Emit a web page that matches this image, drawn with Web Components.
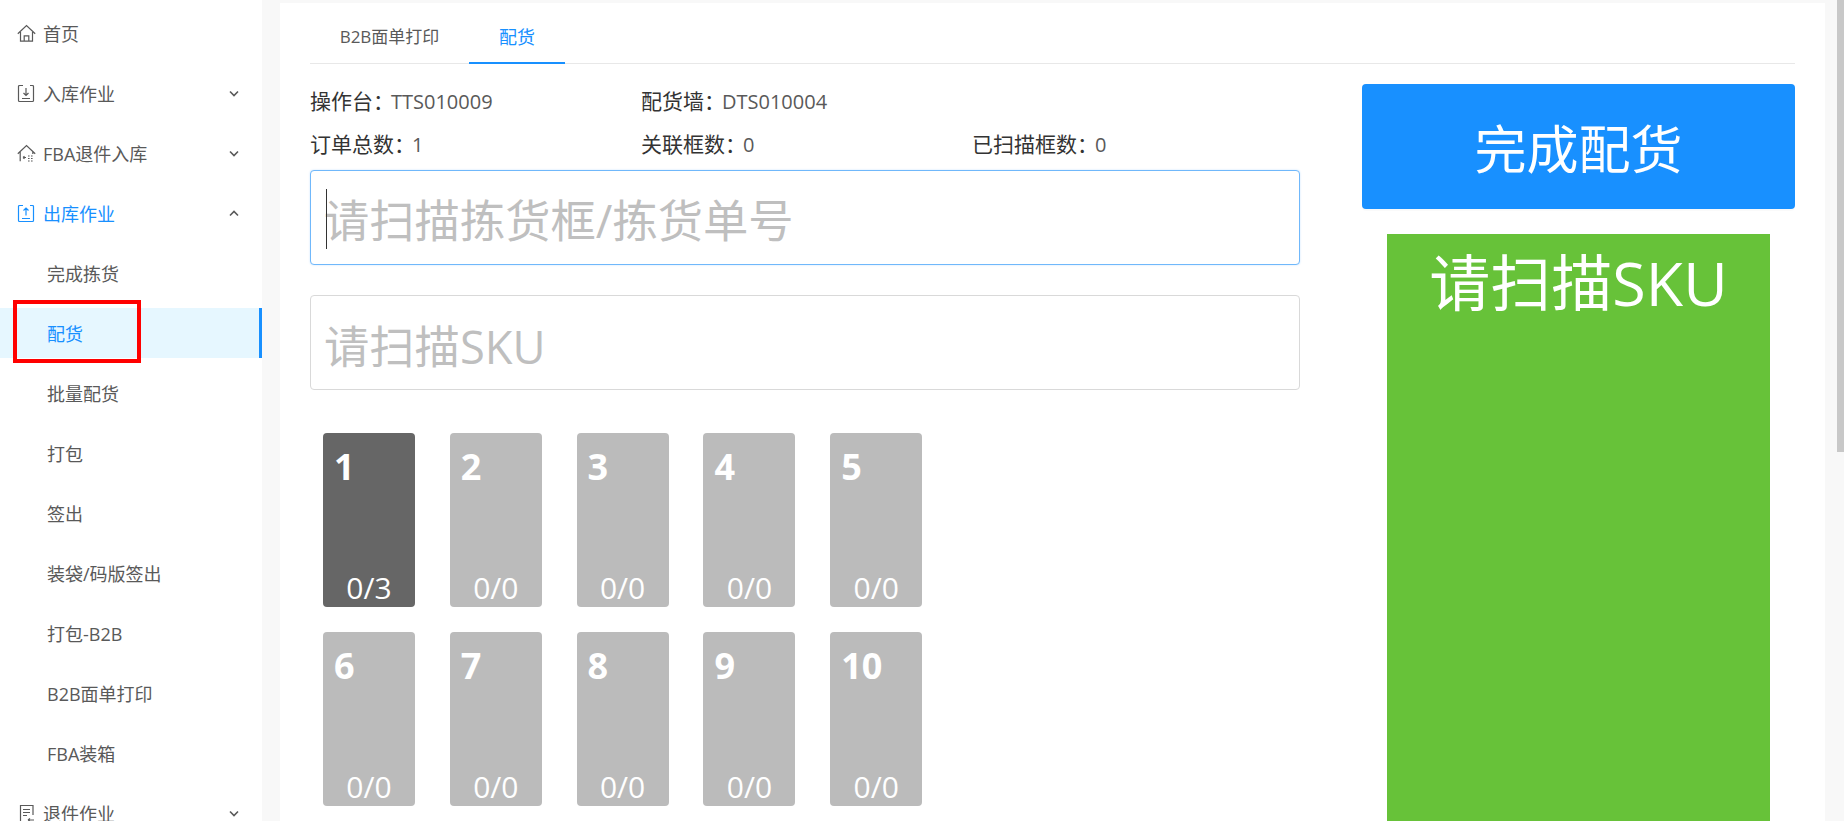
<!DOCTYPE html>
<html lang="zh">
<head>
<meta charset="utf-8">
<title>配货</title>
<style>
  html, body { margin: 0; height: 821px; overflow: hidden; }
  body {
    display: flex;
    background: #f8f8f8;
    font-family: "Open Sans", "Noto Sans CJK SC", sans-serif;
    color: #595959;
  }
</style>
</head>
<body>
<side-menu>
  <menu-item icon="home">首页</menu-item>
  <menu-item icon="in" arrow="down">入库作业</menu-item>
  <menu-item icon="fba" arrow="down">FBA退件入库</menu-item>
  <menu-item icon="out" arrow="up" open>出库作业</menu-item>
  <menu-item sub>完成拣货</menu-item>
  <menu-item sub active marked>配货</menu-item>
  <menu-item sub>批量配货</menu-item>
  <menu-item sub>打包</menu-item>
  <menu-item sub>签出</menu-item>
  <menu-item sub>装袋/码版签出</menu-item>
  <menu-item sub>打包-B2B</menu-item>
  <menu-item sub>B2B面单打印</menu-item>
  <menu-item sub>FBA装箱</menu-item>
  <menu-item icon="back" arrow="down">退件作业</menu-item>
</side-menu>
<pick-page></pick-page>
<fake-scrollbar></fake-scrollbar>

<script>
// Iconos del menu lateral
const ICONS = {
  home: '<path d="M.8 9.7 9.5 1.5l8.7 8.2M3.5 8v9.2h12V8M7.2 17.2v-5.4h4.6v5.4"/>',
  in: '<path d="M6 1.5H2.5a1 1 0 0 0-1 1v14a1 1 0 0 0 1 1h13a1 1 0 0 0 1-1v-14a1 1 0 0 0-1-1H13M9 4v7.5M6.5 9 9 11.5 11.5 9M5 14.5h8"/>',
  fba: '<path d="M.8 9.7 9.5 1.5l8.7 8.2M3.2 8v9.2M15.8 8v2"/><path d="M6 13.5h3M6 13.5l1.5-1.2M6 13.5l1.5 1.2M11 12h1.6M14 12h1.6M11 14.5h1.6M14 14.5h1.6M14 17h1.6M11 17h1.6"/>',
  out: '<path d="M6 1.5H2.5a1 1 0 0 0-1 1v14a1 1 0 0 0 1 1h13a1 1 0 0 0 1-1v-14a1 1 0 0 0-1-1H13M9 11.5V4M6.5 6.5 9 4l2.5 2.5M5 14.5h8"/>',
  back: '<path d="M16 11V1.5H3.5v16H9M6 5.5h7M6 8.5h7M6 11.5h4M11 16h6M11 16l2-1.6M11 16l2 1.6"/>'
}

const ARROWS = {
  down: '<path d="M1 1.5 5 5.5 9 1.5"/>',
  up: '<path d="M1 5.5 5 1.5 9 5.5"/>'
}

// Columna lateral con el menu
class SideMenu extends HTMLElement {
  constructor () {
    super()
    this.attachShadow({ mode: 'open' })
    this.shadowRoot.innerHTML = /* HTML */`
      <style>
        :host{
          display: block;
          position: relative;
          flex: none;
          width: 262px;
          height: 821px;
          overflow: hidden;
          padding-top: 8px;
          box-sizing: border-box;
          background: #fff;
        }
      </style>
      <slot></slot>
    `
  }
}

// Fila del menu, con icono y flecha opcionales
class MenuItem extends HTMLElement {
  static Styles = /* Css */`
    :host{
      display: flex;
      align-items: center;
      position: relative;
      height: 50px;
      margin-bottom: 10px;
      padding-left: 17px;
      font-size: 18px;
      color: #595959;
    }
    :host([sub]){ padding-left: 47px; }
    :host([open]){ color: #1890ff; }
    :host([active]){
      background: #e6f7ff;
      color: #1890ff;
      box-shadow: inset -3px 0 0 #1890ff;
    }
    .icon{
      width: 19px;
      height: 19px;
      margin-right: 7px;
      fill: none;
      stroke: currentColor;
      stroke-width: 1.2;
    }
    .arrow{
      position: absolute;
      left: 229px;
      top: 22px;
      width: 10px;
      height: 7px;
      fill: none;
      stroke: #595959;
      stroke-width: 1.6;
    }
    .mark{
      position: absolute;
      left: 13px;
      top: -8px;
      width: 128px;
      height: 63px;
      box-sizing: border-box;
      border: 4px solid #f00;
    }
  `

  constructor () {
    super()
    this.attachShadow({ mode: 'open' })
  }

  connectedCallback () {
    this.render()
  }

  render () {
    const icon = this.getAttribute('icon')
    const arrow = this.getAttribute('arrow')
    this.shadowRoot.innerHTML = /* HTML */`
      <style>${MenuItem.Styles}</style>
      ${icon ? `<svg class="icon" viewBox="0 0 19 19">${ICONS[icon]}</svg>` : ''}
      <slot></slot>
      ${arrow ? `<svg class="arrow" viewBox="0 0 10 7">${ARROWS[arrow]}</svg>` : ''}
      ${this.hasAttribute('marked') ? '<div class="mark"></div>' : ''}
    `
  }
}

// Pestañas de arriba
class TabBar extends HTMLElement {
  constructor () {
    super()
    this.attachShadow({ mode: 'open' })
    this.shadowRoot.innerHTML = /* HTML */`
      <style>
        :host{
          display: flex;
          height: 61px;
          box-sizing: border-box;
          border-bottom: 1px solid #e8e8e8;
        }
        .tab{
          box-sizing: border-box;
          width: 159px;
          height: 61px;
          padding-top: 23px;
          text-align: center;
          font-size: 17px;
          line-height: 22px;
        }
        .tab.on{
          width: 96px;
          font-size: 18px;
          color: #1890ff;
          border-bottom: 2px solid #1890ff;
        }
      </style>
      <div class="tab">B2B面单打印</div>
      <div class="tab on">配货</div>
    `
  }
}

// Una etiqueta con su valor
class InfoField extends HTMLElement {
  constructor () {
    super()
    this.attachShadow({ mode: 'open' })
    this.shadowRoot.innerHTML = /* HTML */`
      <style>
        :host{
          display: block;
          font-size: 21px;
          line-height: 43px;
          color: #333;
        }
        .value{ color: #595959; font-size: 20px; margin-left: -3px; }
      </style>
      ${this.getAttribute('label')}：<span class="value">${this.getAttribute('value')}</span>
    `
  }
}

// Caja de escaneo (el placeholder va como texto)
class ScanInput extends HTMLElement {
  constructor () {
    super()
    this.attachShadow({ mode: 'open' })
    this.shadowRoot.innerHTML = /* HTML */`
      <style>
        :host{
          display: flex;
          align-items: center;
          position: relative;
          height: 95px;
          box-sizing: border-box;
          padding: 3px 0 0 13px;
          border: 1px solid #d9d9d9;
          border-radius: 4px;
          background: #fff;
          font-size: 45.3px;
          color: #bfbfbf;
        }
        :host([focused]){
          padding-top: 0;
          border-color: #70b8fb;
          box-shadow: 0 0 2px rgba(24,144,255,.25);
        }
        .caret{
          position: absolute;
          left: 15px;
          top: 18px;
          width: 1px;
          height: 60px;
          background: #333;
        }
      </style>
      <slot></slot>
      ${this.hasAttribute('focused') ? '<div class="caret"></div>' : ''}
    `
  }
}

// Casilla del muro
class SlotCard extends HTMLElement {
  constructor () {
    super()
    this.attachShadow({ mode: 'open' })
    this.shadowRoot.innerHTML = /* HTML */`
      <style>
        :host{
          display: flex;
          flex-direction: column;
          justify-content: space-between;
          height: 174px;
          box-sizing: border-box;
          border-radius: 4px;
          background: #bbb;
          color: #fff;
        }
        :host([current]){ background: #666; }
        .num{
          padding: 9px 0 0 11px;
          font-size: 36px;
          font-weight: 700;
          line-height: 50px;
        }
        .count{
          text-align: center;
          font-size: 30px;
          line-height: 38px;
        }
      </style>
      <div class="num">${this.getAttribute('number')}</div>
      <div class="count">${this.getAttribute('count')}</div>
    `
  }
}

// Columna derecha: boton y aviso verde
class FinishPanel extends HTMLElement {
  constructor () {
    super()
    this.attachShadow({ mode: 'open' })
    this.shadowRoot.innerHTML = /* HTML */`
      <style>
        :host{
          display: block;
          flex: none;
          width: 433px;
          padding-top: 20px;
        }
        button{
          display: block;
          width: 100%;
          height: 125px;
          padding: 0;
          border: 0;
          border-radius: 4px;
          background: #1890ff;
          color: #fff;
          font: inherit;
          font-size: 52px;
          box-shadow: 0 2px 0 rgba(0,0,0,.02);
        }
        .notice{
          margin: 25px 25px 0;
          height: 600px;
          background: #67c239;
          color: #fff;
          font-size: 61px;
          line-height: 98px;
          text-align: center;
        }
      </style>
      <button>完成配货</button>
      <div class="notice">请扫描SKU</div>
    `
  }
}

// Pagina principal
class PickPage extends HTMLElement {
  static Styles = /* Css */`
    :host{
      display: block;
      flex: none;
      width: 1545px;
      height: 818px;
      margin: 3px 0 0 18px;
      padding: 0 30px;
      box-sizing: border-box;
      overflow: hidden;
      background: #fff;
    }
    .body{
      display: flex;
      justify-content: space-between;
    }
    .left{ width: 990px; }
    .info{
      display: grid;
      grid-template-columns: 331px 331px 1fr;
      height: 86px;
      padding-top: 16px;
      margin-bottom: 4px;
    }
    .second{ margin-top: 30px; }
    .slots{
      display: grid;
      grid-template-columns: repeat(5, 92px);
      column-gap: 34.8px;
      row-gap: 25px;
      margin: 43px 0 0 13px;
    }
  `

  constructor () {
    super()
    this.attachShadow({ mode: 'open' })
  }

  connectedCallback () {
    this.render()
  }

  render () {
    const cards = []
    for (let i = 1; i <= 10; i++) {
      cards.push(`<slot-card number="${i}" count="${i === 1 ? '0/3' : '0/0'}" ${i === 1 ? 'current' : ''}></slot-card>`)
    }
    this.shadowRoot.innerHTML = /* HTML */`
      <style>${PickPage.Styles}</style>
      <tab-bar></tab-bar>
      <div class="body">
        <div class="left">
          <div class="info">
            <info-field label="操作台" value="TTS010009"></info-field>
            <info-field label="配货墙" value="DTS010004"></info-field>
            <span></span>
            <info-field label="订单总数" value="1"></info-field>
            <info-field label="关联框数" value="0"></info-field>
            <info-field label="已扫描框数" value="0"></info-field>
          </div>
          <scan-input focused>请扫描拣货框/拣货单号</scan-input>
          <scan-input class="second">请扫描SKU</scan-input>
          <div class="slots">${cards.join('')}</div>
        </div>
        <finish-panel></finish-panel>
      </div>
    `
  }
}

// Barra de scroll del navegador
class FakeScrollbar extends HTMLElement {
  constructor () {
    super()
    this.attachShadow({ mode: 'open' })
    this.shadowRoot.innerHTML = /* HTML */`
      <style>
        :host{
          display: block;
          position: absolute;
          top: 0;
          right: 0;
          width: 7px;
          height: 452px;
          background: #c8c8c8;
        }
      </style>
    `
  }
}

customElements.define('side-menu', SideMenu)
customElements.define('menu-item', MenuItem)
customElements.define('tab-bar', TabBar)
customElements.define('info-field', InfoField)
customElements.define('scan-input', ScanInput)
customElements.define('slot-card', SlotCard)
customElements.define('finish-panel', FinishPanel)
customElements.define('pick-page', PickPage)
customElements.define('fake-scrollbar', FakeScrollbar)
</script>
</body>
</html>
